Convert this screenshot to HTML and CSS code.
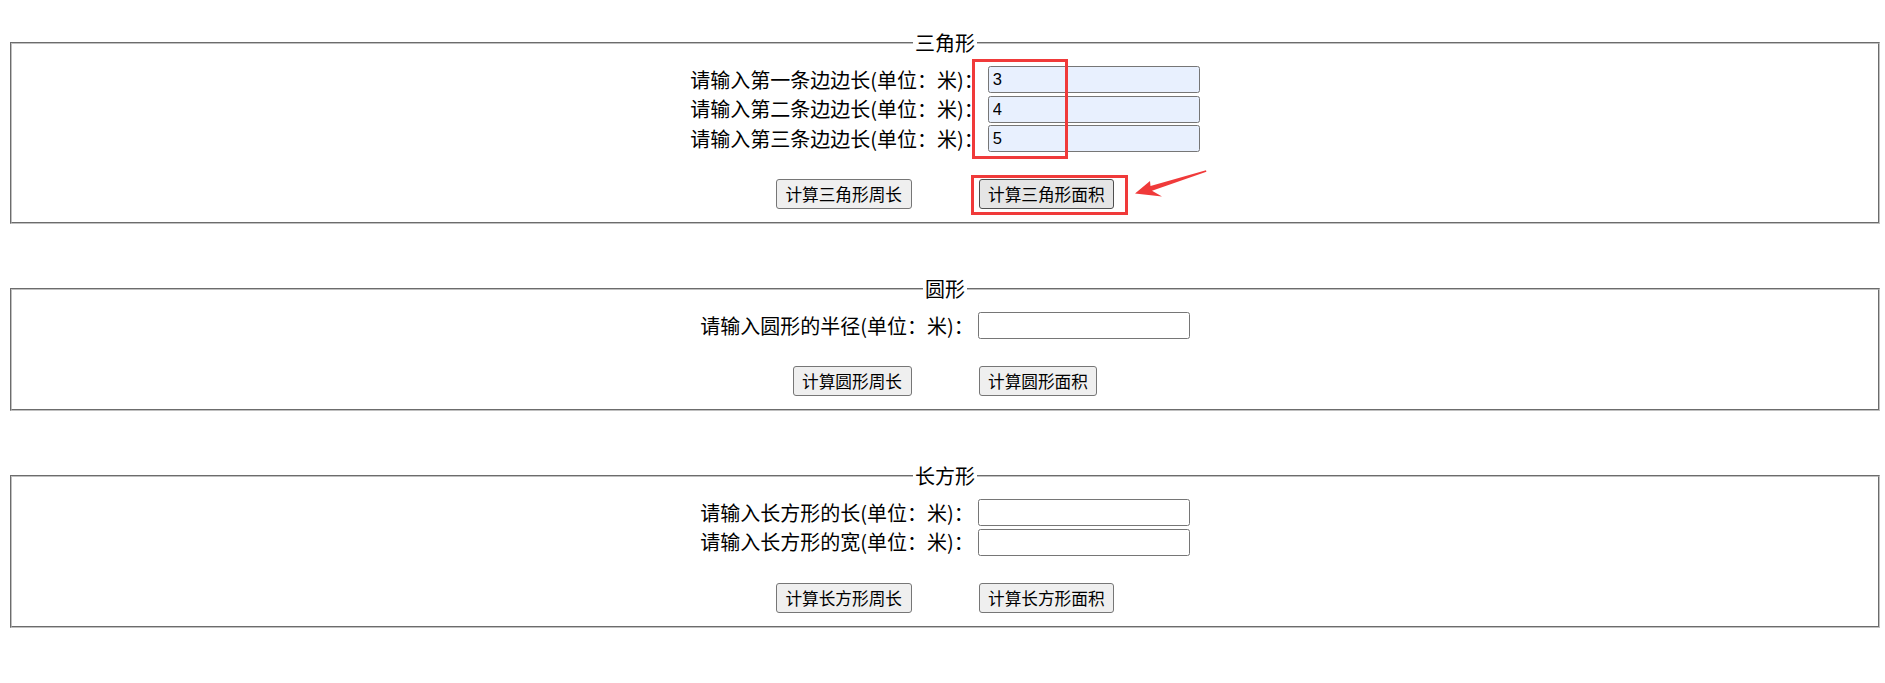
FILE: index.html
```html
<!DOCTYPE html>
<html lang="zh-CN">
<head>
<meta charset="utf-8">
<title>图形计算</title>
<link rel="stylesheet" href="styles.css">
</head>
<body>
<main class="page">
  <fieldset class="shape">
    <legend class="shape-title">三角形</legend>
    <div class="fields">
      <label class="row"><span class="label">请输入第一条边边长(单位：米)：</span><input class="num filled" type="text" value="3"></label>
      <label class="row"><span class="label">请输入第二条边边长(单位：米)：</span><input class="num filled" type="text" value="4"></label>
      <label class="row"><span class="label">请输入第三条边边长(单位：米)：</span><input class="num filled" type="text" value="5"></label>
    </div>
    <div class="actions">
      <button class="btn" type="button">计算三角形周长</button>
      <button class="btn is-hover" type="button">计算三角形面积</button>
    </div>
  </fieldset>

  <fieldset class="shape">
    <legend class="shape-title">圆形</legend>
    <div class="fields">
      <label class="row"><span class="label">请输入圆形的半径(单位：米)：</span><input class="num" type="text"></label>
    </div>
    <div class="actions">
      <button class="btn" type="button">计算圆形周长</button>
      <button class="btn" type="button">计算圆形面积</button>
    </div>
  </fieldset>

  <fieldset class="shape">
    <legend class="shape-title">长方形</legend>
    <div class="fields">
      <label class="row"><span class="label">请输入长方形的长(单位：米)：</span><input class="num" type="text"></label>
      <label class="row"><span class="label">请输入长方形的宽(单位：米)：</span><input class="num" type="text"></label>
    </div>
    <div class="actions">
      <button class="btn" type="button">计算长方形周长</button>
      <button class="btn" type="button">计算长方形面积</button>
    </div>
  </fieldset>
</main>

<div class="mark mark-inputs"></div>
<div class="mark mark-button"></div>
<svg class="arrow" width="80" height="36" viewBox="0 0 80 36" aria-hidden="true">
  <polygon points="5,28.5 20,16 20.5,21 76,5.3 76.4,6.7 22,25.8 32,31.5" fill="#f03a3a"/>
</svg>
</body>
</html>
```

FILE: styles.css
```css
* {
  box-sizing: border-box;
}

html,
body {
  margin: 0;
  padding: 0;
  background: #fff;
}

body {
  position: relative;
  font-family: "Noto Sans CJK SC", "Microsoft YaHei", sans-serif;
  font-size: 20px;
  color: #000;
}

.page {
  display: flex;
  flex-direction: column;
  gap: 52px;
  padding: 30px 5px 0 10px;
}

.shape {
  margin: 0;
  min-width: 0;
  padding: 9px 0 13px;
  border: 2px groove rgb(192, 192, 192);
}

.shape-title {
  margin: 0 auto;
  padding: 0 2px;
  font-size: 20px;
  line-height: 26px;
}

.fields {
  display: flex;
  flex-direction: column;
}

.row {
  display: flex;
  justify-content: center;
  align-items: center;
  gap: 4px;
  height: 29.5px;
}

.label {
  white-space: nowrap;
  line-height: 26px;
}

.num {
  width: 212px;
  height: 27px;
  margin: 0;
  padding: 0 4px;
  border: 1px solid #767676;
  border-radius: 2.5px;
  background: #fff;
  font-family: "Liberation Sans", Arial, sans-serif;
  font-size: 16.5px;
  color: #000;
}

.num.filled {
  background: #e8f0fe;
}

.actions {
  display: flex;
  justify-content: center;
  gap: 67px;
  margin-top: 25.5px;
}

.btn {
  height: 30px;
  margin: 0;
  padding: 0 8.5px;
  border: 1px solid #767676;
  border-radius: 3px;
  background: #efefef;
  font-family: "Noto Sans CJK SC", "Microsoft YaHei", sans-serif;
  font-size: 16.67px;
  line-height: 20px;
  color: #000;
}

.btn.is-hover {
  background: #e5e5e5;
  border-color: #4f4f4f;
}

.mark {
  position: absolute;
  border: 3px solid #f03a3a;
}

.mark-inputs {
  left: 972px;
  top: 59px;
  width: 96px;
  height: 100px;
}

.mark-button {
  left: 971px;
  top: 175px;
  width: 157px;
  height: 40px;
}

.arrow {
  position: absolute;
  left: 1130px;
  top: 165px;
}
```
